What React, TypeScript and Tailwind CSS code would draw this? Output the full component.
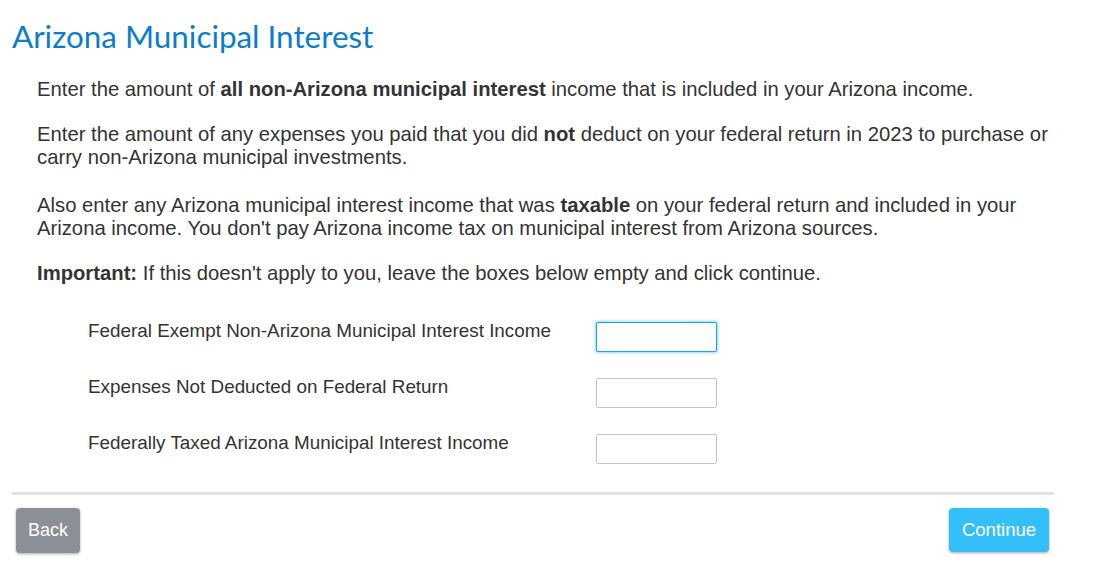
export default function App() {
  const rows = [
    "Federal Exempt Non-Arizona Municipal Interest Income",
    "Expenses Not Deducted on Federal Return",
    "Federally Taxed Arizona Municipal Interest Income",
  ];
  return (
    <div className="w-[1108px] h-[575px] bg-white overflow-hidden" style={{ fontFamily: '"Liberation Sans", Arial, sans-serif' }}>
      <div className="w-[1042px] ml-[12px]">
        <h1 className="pt-[18px] text-[31.4px] leading-[36px] text-[#0b7dcb]" style={{ fontFamily: 'Lato, "Open Sans", sans-serif' }}>
          Arizona Municipal Interest
        </h1>
        <div className="ml-[25px] w-[1030px] mt-[24px] text-[20.25px] leading-[23px] text-[#333333]">
          <p>
            Enter the amount of <b>all non-Arizona municipal interest</b> income that is included in your Arizona income.
          </p>
          <p className="mt-[22px]">
            Enter the amount of any expenses you paid that you did <b>not</b> deduct on your federal return in 2023 to purchase or carry non-Arizona municipal investments.
          </p>
          <p className="mt-[25px]">
            Also enter any Arizona municipal interest income that was <b>taxable</b> on your federal return and included in your Arizona income. You don't pay Arizona income tax on municipal interest from Arizona sources.
          </p>
          <p className="mt-[22px]">
            <b>Important:</b> If this doesn't apply to you, leave the boxes below empty and click continue.
          </p>
        </div>
        <div className="mt-[37px] ml-[76px] flex flex-col gap-[26px]">
          {rows.map((r, i) => (
            <div key={r} className="flex items-center">
              <div className="w-[508px] text-[18.85px] leading-[22px] text-[#333333] -mt-[12px]">{r}</div>
              <input
                className={
                  "w-[121px] h-[30px] rounded-[2px] outline-none bg-white " +
                  (i === 0
                    ? "border border-[#1aa4ea] shadow-[0_0_3px_1px_rgba(26,164,234,0.45)]"
                    : "border border-[#c4c4c4]")
                }
              />
            </div>
          ))}
        </div>
        <div className="mt-[28px] h-[3px] bg-[#e2e2e2]" />
        <div className="mt-[13px] flex justify-between pl-[4px] pr-[5px]">
          <button className="w-[64px] h-[45px] rounded-[4px] bg-[#8b8f96] text-white text-[18px] shadow-[0_1px_3px_rgba(0,0,0,0.35)]">
            Back
          </button>
          <button className="w-[100px] h-[44px] rounded-[4px] bg-[#34bffa] text-white text-[18.5px] shadow-[0_1px_3px_rgba(0,0,0,0.35)]">
            Continue
          </button>
        </div>
      </div>
    </div>
  );
}
